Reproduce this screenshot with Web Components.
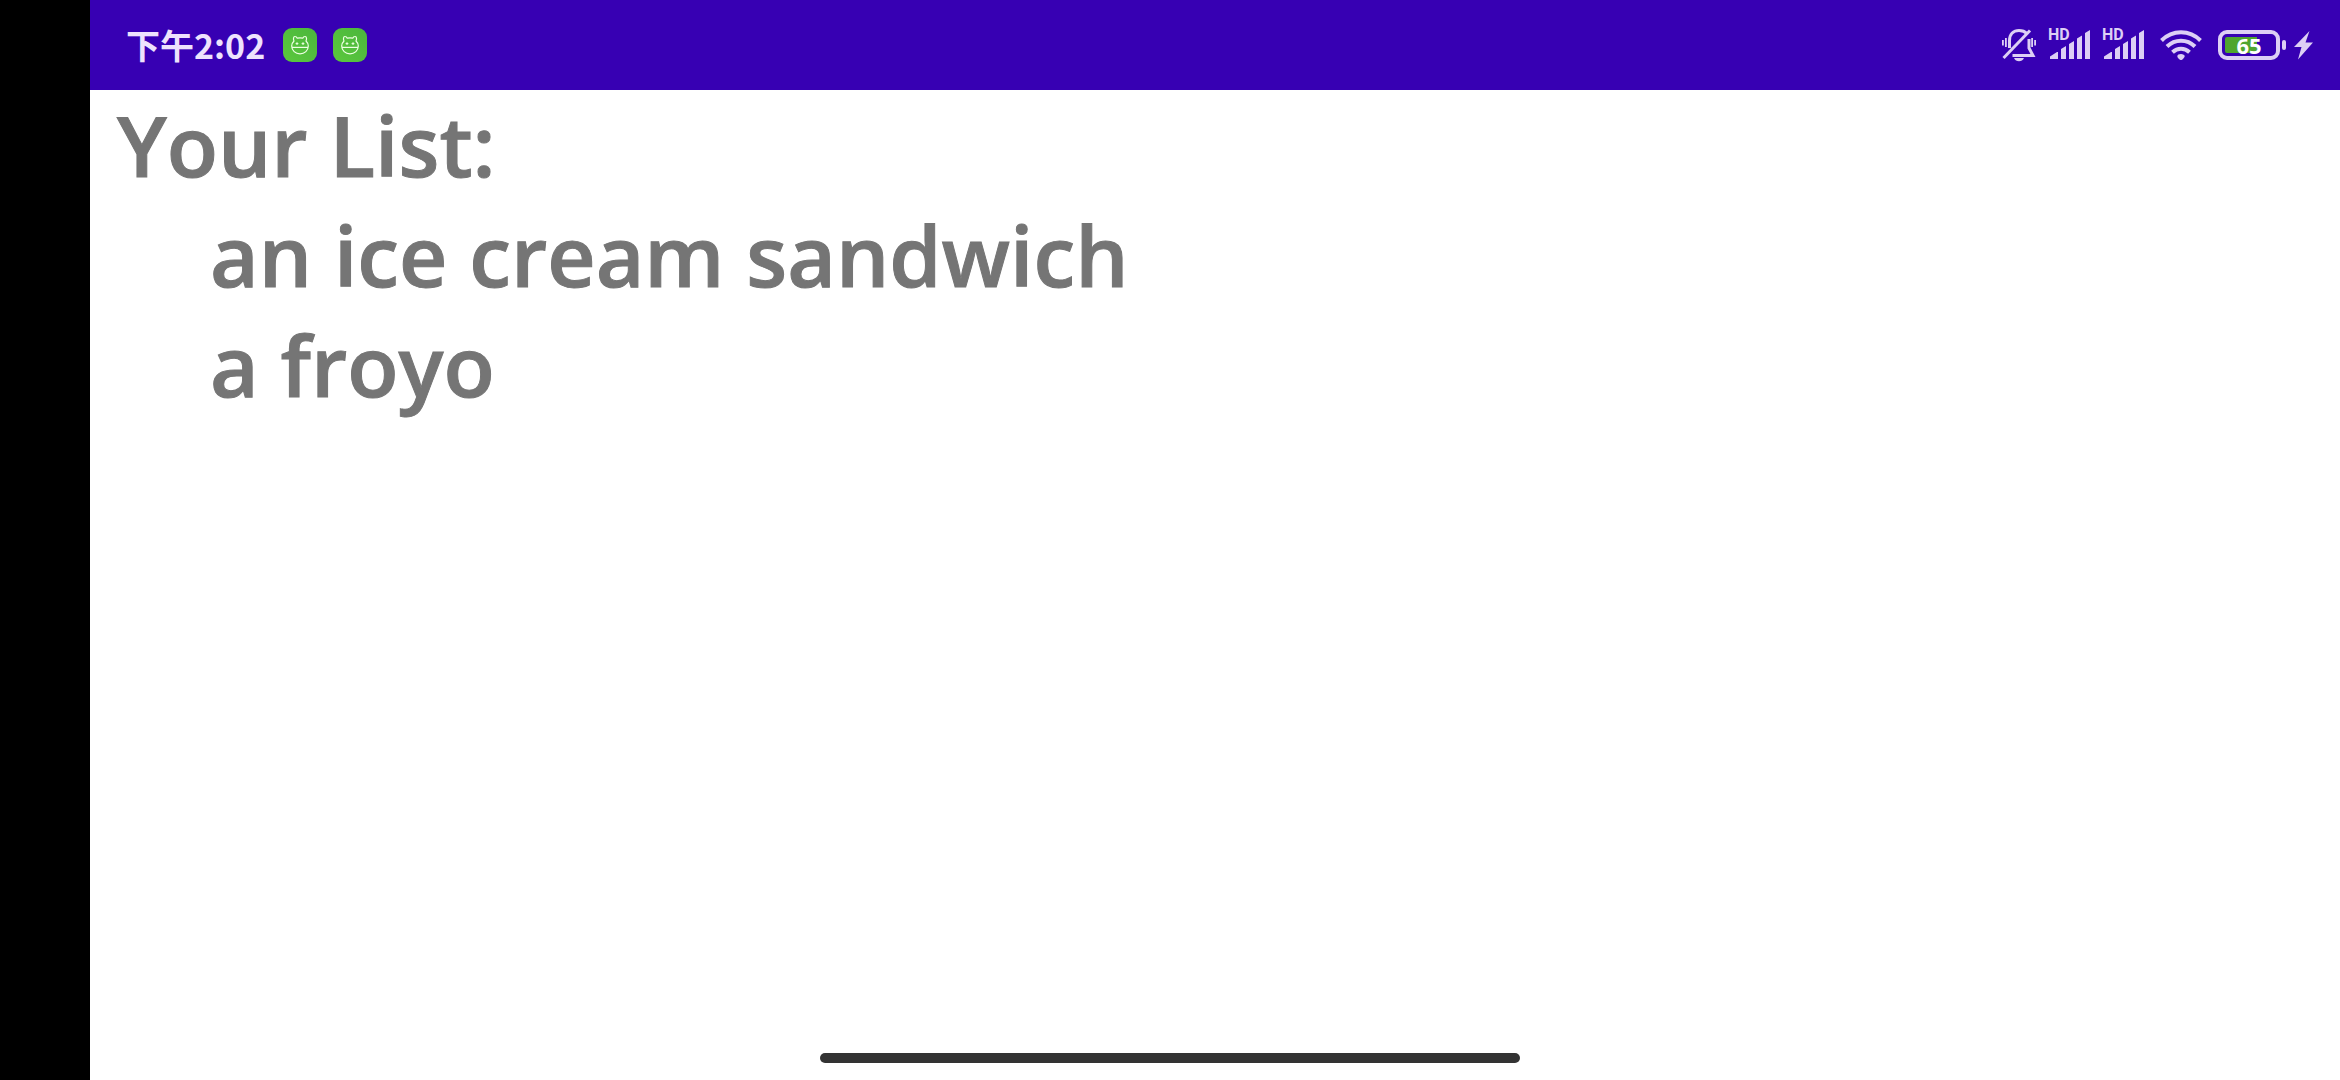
<!DOCTYPE html>
<html lang="zh-CN">
<head>
<meta charset="utf-8">
<meta name="viewport" content="width=device-width, initial-scale=1">
<title>Your List</title>
<style>
body { margin: 0; background: #fff; }
</style>
</head>
<body>
<phone-screen>
  <status-bar slot="status">
    <status-time slot="start">下午2:02</status-time>
    <app-badge slot="start"></app-badge>
    <app-badge slot="start"></app-badge>
    <muted-bell slot="end"></muted-bell>
    <signal-meter slot="end">HD</signal-meter>
    <signal-meter slot="end">HD</signal-meter>
    <wifi-icon slot="end"></wifi-icon>
    <battery-meter slot="end">65</battery-meter>
  </status-bar>
  <shopping-list>
    <span slot="title">Your List:</span>
    <list-entry>an ice cream sandwich</list-entry>
    <list-entry>a froyo</list-entry>
  </shopping-list>
  <home-indicator slot="overlay"></home-indicator>
</phone-screen>
<script>
const define = (name, html) => {
  const template = document.createElement('template');
  template.innerHTML = html;
  customElements.define(name, class extends HTMLElement {
    constructor() {
      super();
      this.attachShadow({ mode: 'open' }).append(template.content.cloneNode(true));
    }
  });
};

define('phone-screen', `
<style>
:host { display: flex; min-height: 100vh; position: relative; color: #757575; }
.cutout { flex: none; width: 90px; background: #000; }
.app { flex: 1; min-width: 0; display: flex; flex-direction: column; background: #fff; }
main { flex: 1; }
</style>
<div class="cutout"></div>
<div class="app"><slot name="status"></slot><main><slot></slot></main></div>
<slot name="overlay"></slot>`);

define('status-bar', `
<style>
:host { display: flex; justify-content: space-between; align-items: center; box-sizing: border-box;
  height: 90px; padding: 0 26px 0 36px; background: #3700b3; color: #ddcff5; }
div { display: flex; align-items: center; }
.start { gap: 16px; }
.end { gap: 12px; }
</style>
<div class="start"><slot name="start"></slot></div>
<div class="end"><slot name="end"></slot></div>`);

define('status-time', `
<style>
:host { display: block; padding-right: 2px; font: 700 34px/48px "Noto Sans CJK SC", sans-serif; color: #eee2fd; white-space: nowrap; }
</style><slot></slot>`);

define('app-badge', `
<style>
:host { display: block; width: 34px; height: 34px; }
svg { display: block; }
</style>
<svg width="34" height="34" viewBox="0 0 34 34" fill="none" stroke="#efffe4" stroke-width="1.2" stroke-linejoin="round">
<defs><linearGradient id="g" x1="0" y1="1" x2="1" y2="0"><stop stop-color="#5bc83d"/><stop offset="1" stop-color="#4bb63d"/></linearGradient></defs>
<rect width="34" height="34" rx="9" fill="url(#g)" stroke="none"/>
<path d="M11 13C10.200 11.500 10.200 8.500 11.900 8.500c1.200 0 1.900.6 2.200 1.700 1.900-.5 3.900-.5 5.800 0 .3-1.100 1-1.700 2.200-1.700 1.700 0 1.700 3 .9 4.500 1.600 1.500 2.300 3.100 2.300 5A8.300 7.900 0 0 1 8.700 18c0-1.900.7-3.500 2.300-5z"/>
<path d="M9 19.400h16"/>
<path d="M14 14.200v2.800M20 14.200v2.800M12.600 15.600h2.800M18.600 15.600h2.800" stroke-width="1"/>
</svg>`);

define('muted-bell', `
<style>
:host { display: block; width: 34px; height: 36px; }
svg { display: block; }
</style>
<svg width="34" height="36" viewBox="1 0 34 36" fill="none" stroke="#ddcff5" stroke-width="3" stroke-linecap="butt">
<path d="M8.500 21V13.500C8.500 7 12.500 3.500 18 3.500c3.500 0 6 1 7.800 3"/>
<path d="M28 12v9l4 7.500H11.500"/>
<path d="M2.500 31 29 3.500"/>
<path d="M13 31h10c-1 2.200-2.800 3.200-5 3.200S14 33.200 13 31z" fill="#ddcff5" stroke="none"/>
<path d="M1.900 13v5.500M4.900 11v9M31.100 11v9M34.100 13v5.500" stroke-width="1.800"/>
</svg>`);

define('signal-meter', `
<style>
:host { display: grid; width: 42px; height: 34px; }
span, svg { grid-area: 1 / 1; }
span { align-self: start; font: 700 16px/14px Roboto, sans-serif; }
svg { display: block; align-self: end; }
</style>
<span><slot></slot></span>
<svg width="42" height="34" viewBox="0 0 42 34" fill="#ddcff5">
<path d="M2 31V28.500L9 24h1v7zM13 31V21l5-3v13zM21 31V16l5-3v18zM29 31V10.500l5-3V31zM37 31V5l5-3v29z"/>
</svg>`);

define('wifi-icon', `
<style>
:host { display: block; width: 42px; height: 30px; margin: 0 4px; }
svg { display: block; }
</style>
<svg width="42" height="30" viewBox="0 0 42 30" fill="none" stroke="#ddcff5" stroke-width="4">
<path d="M1.500 10.500C12.500-.5 29.500-.5 40.500 10.500"/>
<path d="M7 16.500c8-7.800 20-7.800 28 0"/>
<path d="M12.500 22.300c5-4.600 12-4.600 17 0"/>
<path d="M21 24c2 0 3.700 1 3.700 2.200S22.200 30 21 30s-3.700-2.500-3.700-3.800S19 24 21 24z" fill="#ddcff5" stroke="none"/>
</svg>`);

define('battery-meter', `
<style>
:host { display: grid; width: 96px; height: 30px; }
span, svg { grid-area: 1 / 1; }
svg { display: block; }
span { z-index: 1; width: 62px; text-align: center; font: 700 22px/30px "Open Sans", sans-serif; color: #fff; }
</style>
<svg width="96" height="30" viewBox="0 0 96 30" fill="#ddcff5">
<rect x="2" y="2" width="58" height="26" rx="7" fill="none" stroke="#ddcff5" stroke-width="4"/>
<path d="M9 7h30v16H9a2 2 0 0 1-2-2V9a2 2 0 0 1 2-2z" fill="#4fa52e"/>
<rect x="64" y="10" width="4" height="10" rx="2"/>
<path d="M91.500 1 76 17h7.500L80 29.500 95 12.500h-7.500z"/>
</svg>
<span><slot></slot></span>`);

define('shopping-list', `
<style>
:host { display: block; padding: 0 27px; font: 600 84px/110px "Open Sans", sans-serif; -webkit-text-stroke: 1px currentColor; }
h1 { margin: 0; font: inherit; }
.items { display: flex; flex-direction: column; padding-left: 93px; }
</style>
<h1><slot name="title"></slot></h1>
<div class="items" role="list"><slot></slot></div>`);

define('list-entry', `
<style>:host { display: block; }</style>
<div role="listitem"><slot></slot></div>`);

define('home-indicator', `
<style>
:host { position: absolute; left: 0; right: 0; bottom: 17px; display: flex; justify-content: center; }
div { width: 30%; max-width: 700px; height: 10px; border-radius: 5px; background: #333; }
</style><div></div>`);
</script>
</body>
</html>
